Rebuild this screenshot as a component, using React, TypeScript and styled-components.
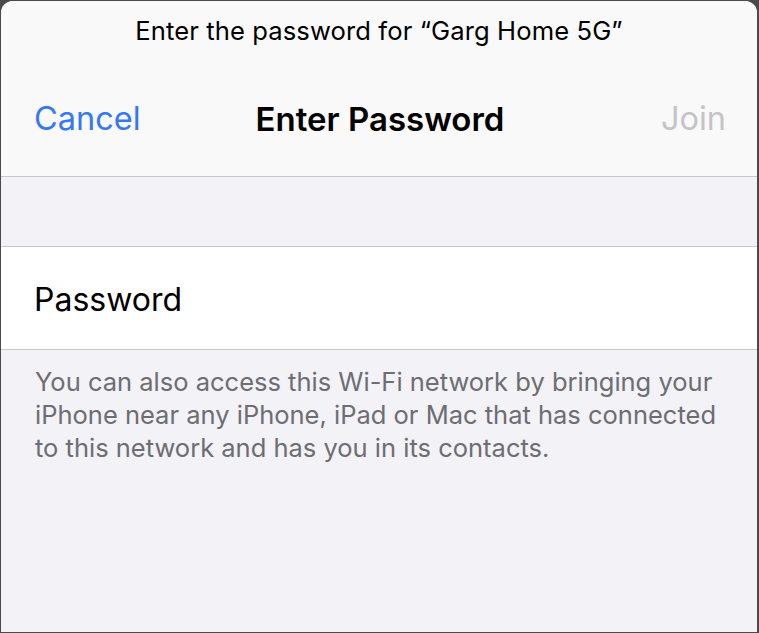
import React from "react";
import styled, { createGlobalStyle } from "styled-components";

const Global = createGlobalStyle`
  html, body { margin: 0; padding: 0; height: 100%; }
  body {
    background: #4a4a4a;
    font-family: Inter, "Noto Sans", "Liberation Sans", sans-serif;
    -webkit-font-smoothing: antialiased;
  }
  #root { height: 100%; }
`;

const Frame = styled.div`
  height: 100vh;
  box-sizing: border-box;
  padding: 1px 2px 1px 1px;
  display: flex;
`;

const Sheet = styled.div`
  flex: 1;
  display: flex;
  flex-direction: column;
  background: #f2f2f7;
  border-radius: 12px 12px 0 0;
  overflow: hidden;
`;

const Header = styled.header`
  background: #f9f9f9;
  border-bottom: 1px solid #c8c7cc;
  display: flex;
  flex-direction: column;
`;

const Prompt = styled.div`
  height: 58px;
  display: flex;
  align-items: center;
  justify-content: center;
  font-size: 25.6px;
  color: #000;
  letter-spacing: 0.1px;
`;

const NavBar = styled.div`
  height: 117px;
  box-sizing: border-box;
  display: grid;
  grid-template-columns: 1fr auto 1fr;
  align-items: center;
  padding: 2px 31px 0 33px;
`;

const NavButton = styled.span<{ $align: "left" | "right"; $disabled?: boolean }>`
  font-size: 32.5px;
  color: ${(p) => (p.$disabled ? "#c4c4c7" : "#3478f6")};
  justify-self: ${(p) => (p.$align === "left" ? "start" : "end")};
`;

const Title = styled.span`
  font-size: 33px;
  font-weight: 600;
  color: #000;
`;

const Gap = styled.div`
  height: 69px;
  border-bottom: 1px solid #c8c7cc;
`;

const Row = styled.div`
  height: 103px;
  box-sizing: border-box;
  background: #fff;
  border-bottom: 1px solid #c8c7cc;
  display: flex;
  align-items: center;
  padding: 2px 33px 0;
`;

const RowLabel = styled.span`
  font-size: 32px;
  color: #000;
`;

const Footer = styled.p`
  margin: 0;
  padding: 15px 34px 0;
  font-size: 25.5px;
  line-height: 33px;
  color: #6d6d72;
`;

export default function App() {
  return (
    <>
      <Global />
      <Frame>
        <Sheet>
          <Header>
            <Prompt>Enter the password for “Garg Home 5G”</Prompt>
            <NavBar>
              <NavButton $align="left">Cancel</NavButton>
              <Title>Enter Password</Title>
              <NavButton $align="right" $disabled>
                Join
              </NavButton>
            </NavBar>
          </Header>
          <Gap />
          <Row>
            <RowLabel>Password</RowLabel>
          </Row>
          <Footer>
            You can also access this Wi-Fi network by bringing your
            <br />
            iPhone near any iPhone, iPad or Mac that has connected
            <br />
            to this network and has you in its contacts.
          </Footer>
        </Sheet>
      </Frame>
    </>
  );
}
